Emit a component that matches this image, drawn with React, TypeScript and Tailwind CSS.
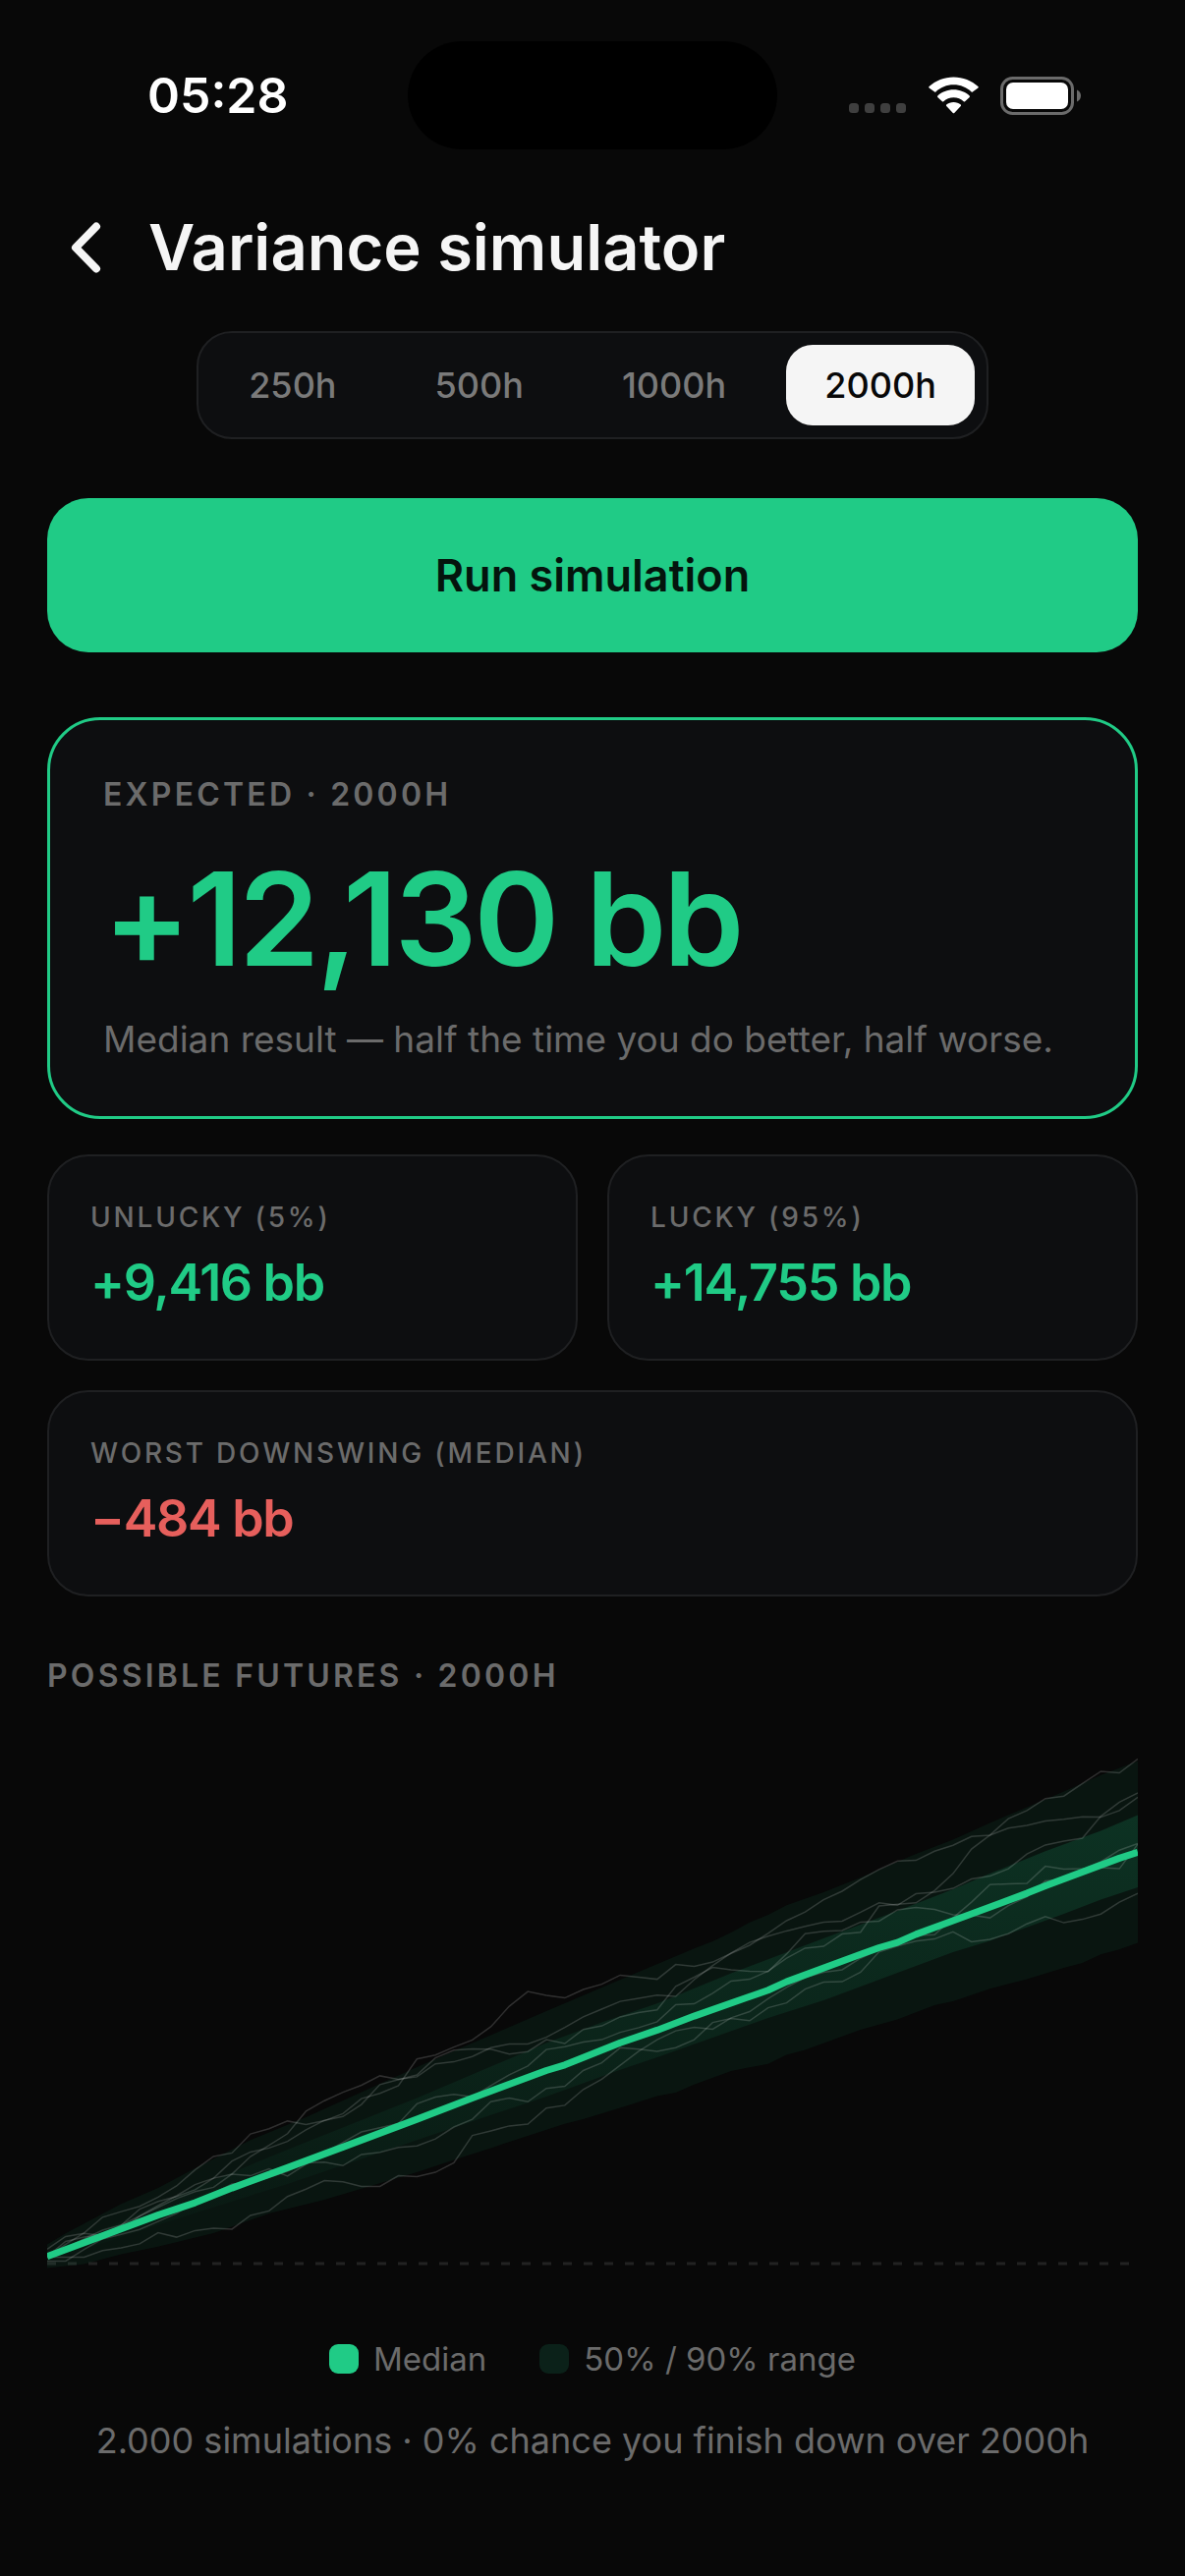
import { useState } from "react";

const HOURS = ["250h", "500h", "1000h", "2000h"];

// Chart values are rows counted from the top of the plot, 2.8 rows to a pixel.
const ROWS = 2.8;
const STEP = 1110 / 59;

const MEDIAN = [[0, 1475], [6, 1357], [8, 1322], [10, 1280], [13, 1222], [16, 1163], [20, 1084], [23, 1023], [27, 945], [28, 929], [31, 866], [33, 830], [35, 790], [39, 716], [40, 692], [44, 614], [45, 595], [46, 580], [47, 557], [49, 518], [53, 440], [54, 419], [58, 340], [59, 323]];
const P95 = [[0, 1441], [1, 1409], [4, 1325], [6, 1280], [8, 1224], [11, 1143], [14, 1078], [20, 935], [23, 867], [27, 776], [31, 686], [35, 597], [36, 577], [37, 552], [38, 523], [39, 501], [40, 474], [42, 437], [44, 395], [47, 328], [49, 287], [51, 239], [53, 195], [55, 150], [57, 103], [59, 63]];
const P05 = [[0, 1508], [2, 1497], [4, 1469], [6, 1447], [9, 1408], [12, 1352], [15, 1313], [20, 1235], [22, 1200], [24, 1166], [26, 1131], [28, 1097], [29, 1084], [31, 1051], [33, 1018], [34, 1008], [35, 985], [37, 946], [39, 926], [40, 900], [41, 886], [44, 829], [46, 799], [48, 759], [49, 748], [51, 712], [53, 685], [55, 652], [56, 638], [57, 614], [58, 600], [59, 581]];
const P75 = [[0, 1462], [4, 1375], [8, 1280], [13, 1170], [20, 1023], [27, 867], [30, 808], [33, 754], [37, 668], [42, 568], [46, 490], [49, 428], [51, 384], [54, 320], [57, 262], [59, 217]];
const P25 = [[0, 1490], [6, 1385], [13, 1268], [20, 1143], [27, 1019], [31, 943], [33, 907], [39, 795], [42, 745], [46, 666], [49, 608], [51, 575], [55, 498], [57, 458], [59, 423]];

// One value per step, 60 steps each.
const RUNS = [
  [1478, 1440, 1408, 1363, 1347, 1332, 1306, 1274, 1228, 1190, 1180, 1126, 1111, 1089, 1099, 1088, 1068, 1025, 1010, 988, 912, 901, 878, 858, 820, 762, 720, 731, 738, 714, 699, 673, 679, 685, 643, 648, 636, 611, 588, 554, 518, 493, 458, 434, 401, 372, 348, 346, 320, 303, 278, 274, 254, 246, 234, 229, 222, 223, 204, 166],
  [1454, 1418, 1409, 1415, 1386, 1340, 1318, 1304, 1285, 1252, 1203, 1177, 1166, 1147, 1114, 1087, 1076, 1042, 985, 971, 958, 909, 887, 883, 884, 898, 891, 857, 868, 828, 818, 792, 780, 772, 705, 679, 651, 658, 662, 663, 613, 555, 548, 546, 522, 519, 487, 480, 486, 501, 502, 510, 475, 450, 405, 400, 372, 350, 317, 298],
  [1470, 1450, 1425, 1400, 1385, 1360, 1335, 1310, 1290, 1278, 1240, 1190, 1158, 1125, 1061, 1031, 1007, 987, 960, 970, 963, 926, 920, 905, 880, 869, 869, 850, 822, 792, 770, 748, 739, 730, 734, 686, 646, 610, 580, 562, 547, 534, 522, 519, 494, 467, 474, 441, 437, 426, 399, 391, 370, 328, 302, 291, 283, 220, 180, 154],
  [1475, 1432, 1420, 1412, 1400, 1360, 1330, 1302, 1270, 1252, 1240, 1245, 1225, 1246, 1212, 1180, 1150, 1120, 1108, 1096, 1040, 1021, 1013, 1020, 988, 957, 932, 885, 877, 864, 857, 836, 823, 806, 757, 755, 725, 690, 685, 662, 625, 596, 591, 556, 551, 476, 471, 467, 432, 384, 314, 274, 227, 204, 170, 163, 127, 92, 97, 57],
  [1477, 1477, 1477, 1458, 1450, 1439, 1407, 1420, 1401, 1394, 1397, 1358, 1345, 1304, 1283, 1259, 1262, 1275, 1275, 1245, 1247, 1235, 1208, 1130, 1117, 1103, 1098, 1052, 1044, 999, 970, 930, 890, 857, 832, 822, 827, 795, 777, 740, 708, 680, 665, 658, 625, 600, 580, 560, 558, 510, 465, 415, 413, 412, 363, 371, 370, 367, 370, 300],
  [1488, 1488, 1455, 1425, 1412, 1398, 1375, 1352, 1320, 1295, 1268, 1265, 1250, 1232, 1208, 1206, 1216, 1184, 1178, 1164, 1160, 1140, 1106, 1084, 1034, 1023, 1034, 996, 990, 945, 923, 880, 884, 890, 880, 857, 808, 797, 803, 766, 752, 713, 693, 692, 665, 607, 590, 576, 570, 550, 578, 571, 555, 527, 506, 524, 514, 499, 465, 440],
];

function toPoints(series: number[][]) {
  return series.map(([i, row]) => `${(i * STEP).toFixed(1)},${(row / ROWS).toFixed(1)}`).join(" ");
}

function band(top: number[][], bottom: number[][]) {
  return toPoints([...top, ...[...bottom].reverse()]);
}

function FuturesChart() {
  return (
    <svg viewBox="0 0 1110 560" className="block w-full" role="img" aria-label="Possible futures">
      <defs>
        <linearGradient id="inner" x1="0" y1="0" x2="0" y2="1">
          <stop offset="0" stopColor="#20cb86" stopOpacity="0.16" />
          <stop offset="1" stopColor="#20cb86" stopOpacity="0.01" />
        </linearGradient>
      </defs>
      <line x1="0" y1="534" x2="1110" y2="534" stroke="#222222" strokeWidth="3" strokeDasharray="9 12" />
      <polygon points={band(P95, P05)} fill="#20cb86" fillOpacity="0.07" />
      <polygon points={band(P75, P25)} fill="url(#inner)" />
      {RUNS.map((run, n) => (
        <polyline
          key={n}
          points={toPoints(run.map((row, i) => [i, row]))}
          fill="none"
          stroke="#ffffff"
          strokeOpacity="0.16"
          strokeWidth="1.5"
        />
      ))}
      <polyline points={toPoints(MEDIAN)} fill="none" stroke="#20cb86" strokeWidth="7" strokeLinejoin="round" />
    </svg>
  );
}

function StatusBar() {
  return (
    <div className="grid grid-cols-[1fr_376px_1fr] items-center pt-[42px]">
      <span className="pl-[150px] text-[50px] leading-[60px] font-semibold text-white">05:28</span>
      <div className="h-[110px] rounded-full bg-black" />
      <div className="flex items-center justify-end gap-[22px] pr-[106px]">
        <svg width="60" height="40" viewBox="0 0 60 40" fill="#3f3f3f">
          <rect x="1" y="28" width="10" height="10" rx="3.500" />
          <rect x="17" y="28" width="10" height="10" rx="3.500" />
          <rect x="33" y="28" width="10" height="10" rx="3.500" />
          <rect x="49" y="28" width="10" height="10" rx="3.500" />
        </svg>
        <svg width="51" height="38" viewBox="0 0 51 38" fill="#ffffff">
          <path d="M25.500 8.200c7 0 13.400 2.700 18.100 7.200.4.400 1 .4 1.300 0l5.500-3.900c.5-.4.500-1 0-1.400C43.900 4 35.100.500 25.500.500S7.100 4 .6 10.100c-.5.400-.5 1 0 1.400l5.500 3.900c.3.400.9.400 1.300 0 4.700-4.500 11.100-7.200 18.100-7.200z" />
          <path d="M25.500 21.300c3.900 0 7.500 1.500 10.200 3.900.4.400 1 .4 1.400 0l4.600-4.300c.4-.4.400-1 0-1.400-4.300-3.900-10-6.200-16.200-6.200s-11.900 2.300-16.200 6.200c-.4.400-.4 1 0 1.400l4.600 4.300c.4.400 1 .4 1.400 0 2.700-2.400 6.300-3.900 10.200-3.900z" />
          <path d="M32.800 30c.4-.4.400-1 0-1.400-1.900-1.700-4.500-2.700-7.300-2.700s-5.400 1-7.300 2.700c-.4.400-.4 1 0 1.400l6.600 6.900c.4.400 1 .4 1.400 0z" />
        </svg>
        <svg width="82" height="39" viewBox="0 0 82 39">
          <rect x="1.500" y="1.500" width="72" height="36" rx="11" fill="none" stroke="#6b6b6b" strokeWidth="3" />
          <rect x="6" y="6" width="63" height="27" rx="7" fill="#ffffff" />
          <path d="M78 13.500c2.400 1 4 3.300 4 6s-1.600 5-4 6z" fill="#6b6b6b" />
        </svg>
      </div>
    </div>
  );
}

function StatCard({ label, value, color, className = "" }: { label: string; value: string; color: string; className?: string }) {
  return (
    <div className={`rounded-[42px] border-2 border-[#1f2022] bg-[#0d0e10] px-[42px] py-[41px] ${className}`}>
      <div className="text-[28px] leading-[42px] font-medium tracking-widest text-[#6b6b6b]">{label}</div>
      <div className={`mt-[10px] text-[52px] leading-[72px] font-semibold tracking-tight ${color}`}>{value}</div>
    </div>
  );
}

export default function App() {
  const [hours, setHours] = useState("2000h");

  return (
    <div className="min-h-screen bg-[#080808] font-['Inter',sans-serif] text-[#f5f5f5]">
      <StatusBar />

      <header className="mt-[58px] flex items-center gap-[48px] px-[72px]">
        <button type="button" aria-label="Back">
          <svg width="31" height="52" viewBox="0 0 31 52" fill="none" stroke="#f5f5f5" strokeWidth="8" strokeLinecap="round" strokeLinejoin="round">
            <path d="M26 4.500 5 26 26 47.500" />
          </svg>
        </button>
        <h1 className="text-[65px] leading-[84px] font-semibold">Variance simulator</h1>
      </header>

      <main className="mt-[43px] px-[48px]">
        <div className="mx-auto flex w-fit gap-[22px] rounded-[36px] border-2 border-[#1f2022] bg-[#0d0e10] p-[12px]">
          {HOURS.map((h) => (
            <button
              key={h}
              type="button"
              aria-pressed={h === hours}
              onClick={() => setHours(h)}
              className={`rounded-[27px] px-[39px] py-[18px] text-[36px] leading-[46px] font-medium ${
                h === hours ? "bg-[#f5f5f5] text-[#080808]" : "text-[#7a7a7a]"
              }`}
            >
              {h}
            </button>
          ))}
        </div>

        <button type="button" className="mt-[60px] block w-full rounded-[42px] bg-[#20cb86] py-[48px] text-[45px] leading-[61px] font-semibold text-[#04140d]">
          Run simulation
        </button>

        <section className="mt-[66px] rounded-[54px] border-3 border-[#20cb86] bg-[#0d0e10] px-[54px] pt-[55px] pb-[51px]">
          <div className="text-[32px] leading-[42px] font-semibold tracking-widest text-[#6b6b6b]">EXPECTED · 2000H</div>
          <div className="mt-[27px] text-[132px] leading-[156px] font-semibold tracking-tight text-[#20cb86]">+12,130 bb</div>
          <p className="mt-[18px] text-[37px] leading-[54px] text-[#6b6b6b]">Median result — half the time you do better, half worse.</p>
        </section>

        <section className="mt-[36px] grid grid-cols-2 gap-[30px]">
          <StatCard label="UNLUCKY (5%)" value="+9,416 bb" color="text-[#20cb86]" />
          <StatCard label="LUCKY (95%)" value="+14,755 bb" color="text-[#20cb86]" />
          <StatCard label="WORST DOWNSWING (MEDIAN)" value="−484 bb" color="text-[#e65f5c]" className="col-span-2" />
        </section>

        <section>
          <h2 className="mt-[60px] mb-[43px] text-[32px] leading-[42px] font-semibold tracking-widest text-[#6b6b6b]">
            POSSIBLE FUTURES · 2000H
          </h2>
          <FuturesChart />
          <div className="mt-[48px] flex justify-center gap-[54px] text-[33px] leading-[46px] text-[#6b6b6b]">
            <div className="flex items-center gap-[15px]">
              <span className="size-[30px] rounded-[9px] bg-[#20cb86]" />
              Median
            </div>
            <div className="flex items-center gap-[15px]">
              <span className="size-[30px] rounded-[9px] bg-[#0b2119]" />
              50% / 90% range
            </div>
          </div>
          <p className="mt-[36px] pb-[90px] text-center text-[36px] leading-[48px] text-[#6b6b6b]">
            2.000 simulations · 0% chance you finish down over 2000h
          </p>
        </section>
      </main>
    </div>
  );
}
